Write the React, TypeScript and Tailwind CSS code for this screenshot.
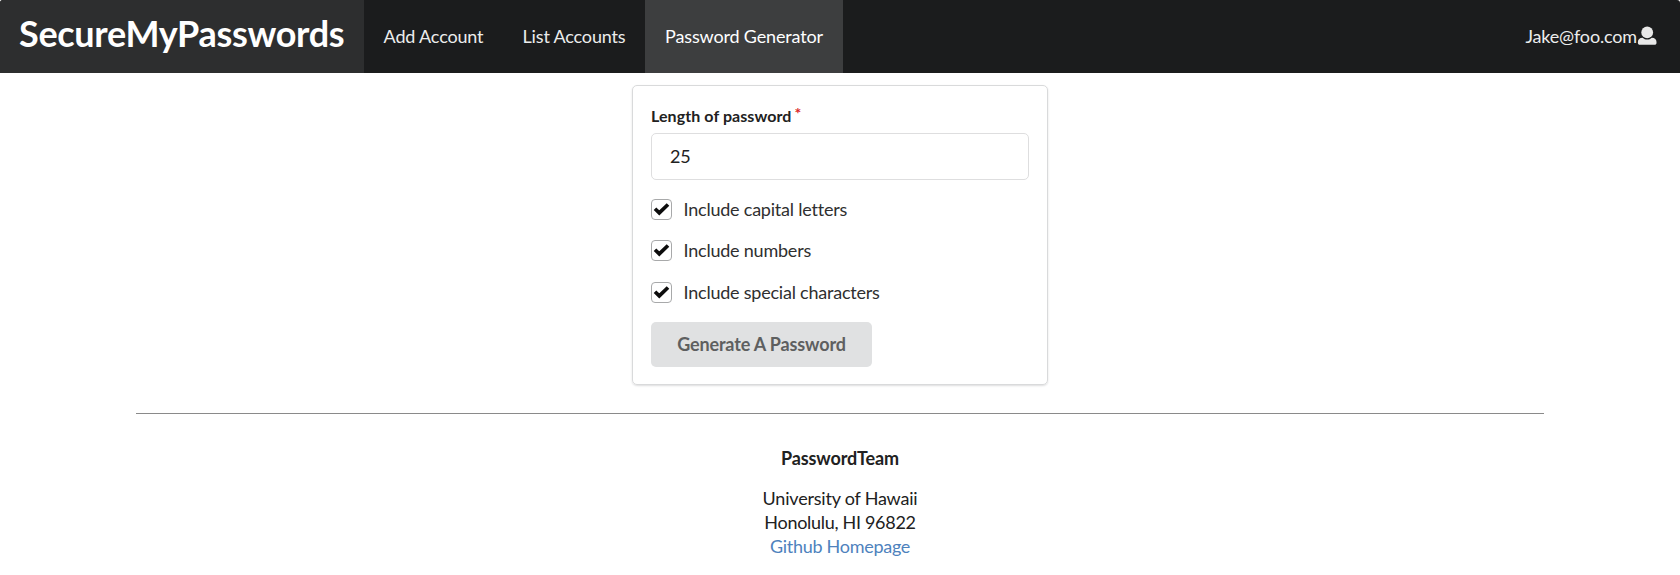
const items = ["Include capital letters", "Include numbers", "Include special characters"];

function Check() {
  return (
    <span className="flex h-[21px] w-[21px] shrink-0 items-center justify-center rounded-[4px] border border-[#a8a9aa] bg-white">
      <svg viewBox="0 0 19 19" className="h-[19px] w-[19px]" fill="none" stroke="#0c0c0c" strokeWidth="3.7">
        <path d="M3 8.700L7.300 12.900L16 4.500" strokeLinejoin="miter" />
      </svg>
    </span>
  );
}

function User() {
  return (
    <svg viewBox="0 0 20 20" className="h-[20px] w-[20px]" fill="#e8e8e8">
      <circle cx="10.200" cy="6.400" r="5.900" />
      <path d="M5.600 11.800C7 13.100 8.500 13.600 10.200 13.600s3.200-.5 4.600-1.800c3 .2 4.700 1.500 4.700 4.300v.9c0 1.100-.8 1.800-1.900 1.800H2.800c-1.100 0-1.900-.7-1.900-1.800v-.9c0-2.800 1.700-4.100 4.700-4.300z" />
    </svg>
  );
}

export default function App() {
  return (
    <div className="h-[575px] overflow-hidden bg-white font-[Lato,sans-serif] text-[18px] leading-[24px] tracking-[-0.21px] text-[#212121] [font-variant-ligatures:none]">
      <nav className="flex h-[73px] rounded-t-[3px] bg-[#1b1c1d] tracking-[-0.16px] text-[#ececec]">
        <a className="flex w-[364px] items-start rounded-tl-[3px] bg-[#2d2e2f] pt-[10px] pl-[19px] text-[36px] leading-[46px] font-bold tracking-[-0.31px] whitespace-nowrap text-white">SecureMyPasswords</a>
        <a className="flex w-[139px] items-center justify-center pb-[2px]">Add Account</a>
        <a className="flex w-[142px] items-center justify-center pb-[2px]">List Accounts</a>
        <a className="flex w-[198px] items-center justify-center bg-[#3d3e3f] pb-[2px] text-white">Password Generator</a>
        <a className="ml-auto flex items-center pr-[23px] pb-[2px]">
          Jake@foo.com
          <User />
        </a>
      </nav>
      <main className="mx-auto mt-[12px] h-[300px] w-[416px] rounded-[5px] border border-[#d9dadb] px-[18px] pt-[19px] shadow-[0_1px_2px_rgba(34,36,38,0.15)]">
        <label className="block h-[28px] text-[16px] leading-[22px] font-bold tracking-[0.08px]">Length of password <span className="relative -top-[3px] -left-px text-[#db2828]">*</span></label>
        <input className="block h-[47px] w-full rounded-[5px] border border-[#dededf] px-[18px] pb-[2px] outline-none" defaultValue="25" />
        <div className="mt-[17.500px] flex flex-col gap-[17px]">
          {items.map((item) => (
            <label key={item} className="flex h-[24px] items-center gap-[11.500px] tracking-[-0.22px] text-[#2f2f2f] last:mt-px"><Check /><span className="pb-px">{item}</span></label>
          ))}
        </div>
        <button className="mt-[17.500px] block h-[45px] w-[221px] rounded-[5px] bg-[#e0e1e2] pb-[2px] font-bold tracking-[-0.14px] text-[#5e5f60]">Generate A Password</button>
      </main>
      <footer className="mx-auto mt-[28px] w-[1408px] border-t border-[#8a8a8a] pt-[32px] text-center">
        <p className="mb-[16px] font-bold tracking-[-0.12px]">PasswordTeam</p>
        <p>University of Hawaii</p>
        <p className="tracking-[-0.3px]">Honolulu, HI 96822</p>
        <a className="tracking-[-0.28px] text-[#4e82bd]">Github Homepage</a>
      </footer>
    </div>
  );
}
